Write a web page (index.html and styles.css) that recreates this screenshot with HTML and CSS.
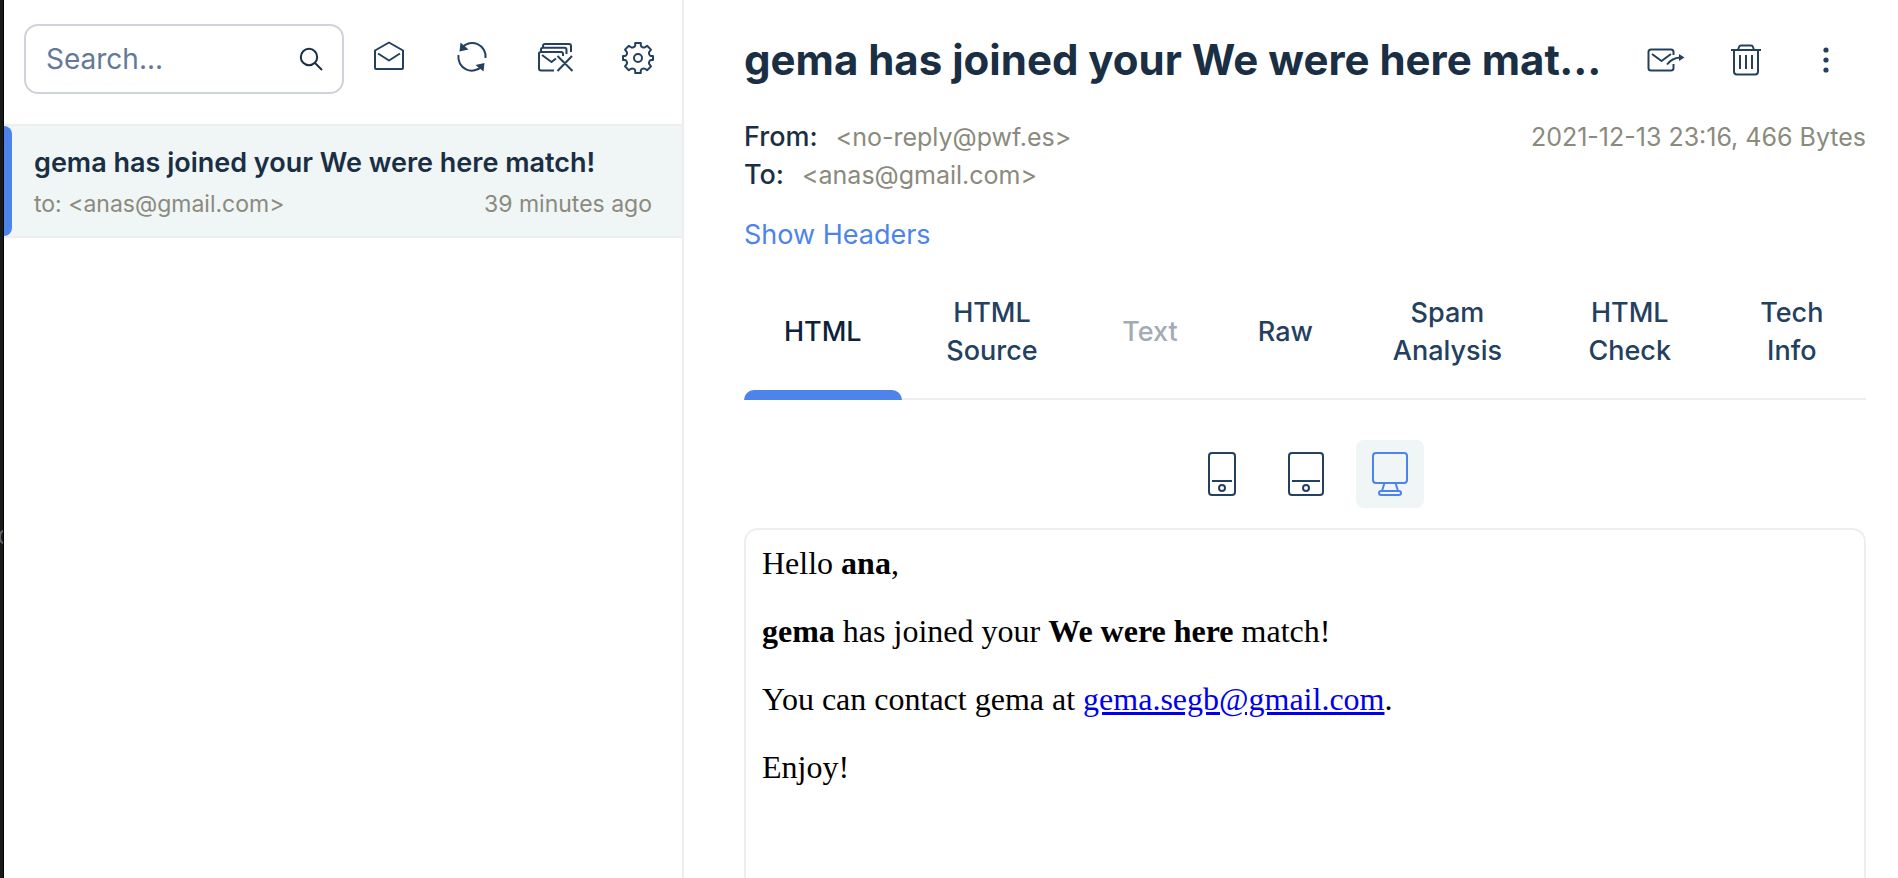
FILE: index.html
```html
<!DOCTYPE html>
<html lang="en">
<head>
<meta charset="utf-8">
<title>Inbox</title>
<link rel="stylesheet" href="styles.css">
</head>
<body>
<div class="app">
  <div class="rail"><svg class="rail-mark" width="3" height="14" viewBox="0 0 3 14"><path d="M3 1Q0 2 0 7t3 6" fill="none" stroke="#62666a" stroke-width="2"/></svg></div>
  <aside class="sidebar">
    <div class="toolbar">
      <div class="search">
        <input class="search-input" type="text" placeholder="Search..." aria-label="Search">
        <svg class="icon search-icon" width="24" height="24" viewBox="0 0 24 24"><circle cx="10" cy="10" r="8.2"/><path d="M16 16l7 7"/></svg>
      </div>
      <div class="actions">
        <button class="icon-btn" aria-label="Mark all as read"><svg class="icon" width="32" height="32" viewBox="0 1 32 32"><path d="M2 10.500L16 2.500l14 8V28q0 1-1 1H3q-1 0-1-1zM5 13.500l11 7 11-7"/></svg></button>
        <button class="icon-btn" aria-label="Refresh"><svg class="icon" width="32" height="32" viewBox="0 0 32 32"><path d="M6 6.500A13.500 13.500 0 0 1 29.500 17M26 25A13.500 13.500 0 0 1 2.500 14"/><path class="solid" d="M4.500 1.500l8 7-9 2zM28.500 22l-1 8.500-8-6.500z"/></svg></button>
        <button class="icon-btn" aria-label="Delete all"><svg class="icon" width="36" height="32" viewBox="0 0 36 32"><path d="M17 29.500H4q-2 0-2-2v-15Q2 11 4 11h20q2 0 2 2v2M4 11V8.500q0-1.800 2-1.800h21.500q2 0 2 2V13M6 6.700V5q0-2 2-2h24q2 0 2 2v6M5 14l9.500 7 4.500-3.500M20.500 15l15 15M35 15L20.500 30"/></svg></button>
        <button class="icon-btn" aria-label="Settings"><svg class="icon" width="34" height="34" viewBox="0 -1 34 34"><circle cx="17" cy="17" r="4"/><path d="M14.200 2h5.600v2.500q.3 1.300 1.600 1.700 1.500.8 2.700 0l2-1.500 3.900 3.900-1.700 2.200q-.8 1.200 0 2.700.4 1.200 1.700 1.500h2v4h-2q-1.300.3-1.700 1.500-.8 1.500 0 2.700l1.700 2.200-3.900 3.900-2-1.500q-1.200-.8-2.700 0-1.300.4-1.600 1.700V32h-5.600v-2.500q-.3-1.300-1.600-1.700-1.500-.8-2.700 0l-2 1.500L4 25.400l1.700-2.200q.8-1.200 0-2.700Q5.300 19.300 4 19H2v-4h2q1.300-.3 1.700-1.500.8-1.500 0-2.700L4 8.600l3.900-3.900 2 1.500q1.200.8 2.700 0 1.300-.4 1.600-1.700z"/></svg></button>
      </div>
    </div>
    <a class="message" href="#message">
      <strong class="message-title">gema has joined your We were here match!</strong>
      <span class="message-meta"><span>to: &lt;anas@gmail.com&gt;</span><span>39 minutes ago</span></span>
    </a>
  </aside>
  <main class="main" id="message">
    <header class="header">
      <h1 class="subject">gema has joined your We were here match!</h1>
      <div class="header-actions">
        <button class="icon-btn" aria-label="Forward"><svg class="icon" width="38" height="24" viewBox="0 0 38 24"><path d="M26.500 7V4q0-2.500-2.500-2.500H4Q1.500 1.500 1.500 4v16q0 2.500 2.500 2.500h20q2.500 0 2.500-2.500v-4M5 6l9.500 7L24 6M20 16.500q5-6.500 13-7"/><path class="solid" d="M32 6l5.500 3.500L32 13z"/></svg></button>
        <button class="icon-btn" aria-label="Delete"><svg class="icon" width="30" height="32" viewBox="0 0 30 32"><path d="M0 6h30M7 6l1-3q.5-1.500 2-1.500h10q1.500 0 2 1.500l1 3M3 6v21.500Q3 30.500 6 30.500h18q3 0 3-3V6M9 11v14M15 11v14M21 11v14"/></svg></button>
        <button class="icon-btn" aria-label="More"><svg width="6" height="26" viewBox="0 0 6 26" fill="#24405f"><circle cx="3" cy="3" r="2.600"/><circle cx="3" cy="13" r="2.600"/><circle cx="3" cy="23" r="2.600"/></svg></button>
      </div>
    </header>
    <section class="details">
      <dl class="people">
        <div class="person"><dt>From:</dt><dd>&lt;no-reply@pwf.es&gt;</dd></div>
        <div class="person"><dt>To:</dt><dd>&lt;anas@gmail.com&gt;</dd></div>
      </dl>
      <span class="stamp">2021-12-13 23:16, 466 Bytes</span>
    </section>
    <a class="headers-link" href="#headers">Show Headers</a>
    <nav class="tabs">
      <button class="tab tab-active">HTML</button>
      <button class="tab">HTML Source</button>
      <button class="tab" disabled>Text</button>
      <button class="tab">Raw</button>
      <button class="tab">Spam Analysis</button>
      <button class="tab">HTML Check</button>
      <button class="tab">Tech Info</button>
    </nav>
    <div class="devices">
      <button class="icon-btn" aria-label="Phone"><svg class="icon" width="28" height="44" viewBox="0 0 28 44"><rect x="1" y="1" width="26" height="42" rx="3"/><path d="M4 29h20"/><circle cx="14" cy="36" r="3"/></svg></button>
      <button class="icon-btn" aria-label="Tablet"><svg class="icon" width="36" height="44" viewBox="0 0 36 44"><rect x="1" y="1" width="34" height="42" rx="3"/><path d="M4 29h28"/><circle cx="18" cy="36" r="3"/></svg></button>
      <button class="icon-btn icon-btn-active" aria-label="Desktop"><svg class="icon" width="36" height="44" viewBox="0 0 36 44"><rect x="1" y="1" width="34" height="30" rx="3"/><path d="M12.500 31L10 39M23.500 31l2.500 8"/><rect x="7" y="39" width="22" height="4" rx="2"/></svg></button>
    </div>
    <article class="preview">
      <p>Hello <b>ana</b>,</p>
      <p><b>gema</b> has joined your <b>We were here</b> match!</p>
      <p>You can contact gema at <a href="mailto:gema.segb@gmail.com">gema.segb@gmail.com</a>.</p>
      <p>Enjoy!</p>
    </article>
  </main>
</div>
</body>
</html>
```
FILE: styles.css
```css
* { box-sizing: border-box; }

body {
  margin: 0;
  background: #fff;
  color: #1a2e44;
  font: 27px/38px Inter, "Liberation Sans", sans-serif;
}

button {
  border: 0;
  padding: 0;
  background: none;
  color: inherit;
  font: inherit;
}

.app {
  display: flex;
  height: 100vh;
  overflow: hidden;
}

.rail {
  position: relative;
  flex: 0 0 4px;
  background: #17191b;
  border-right: 1px solid #000;
}

.rail-mark {
  position: absolute;
  left: 0;
  top: 530px;
}

.sidebar {
  flex: 0 0 680px;
  min-width: 0;
  border-right: 2px solid #eee;
}

.toolbar {
  display: flex;
  align-items: flex-start;
  gap: 11px;
  padding: 24px 10px 30px 20px;
}

.search {
  display: flex;
  flex: 1;
  align-items: center;
  min-width: 0;
  height: 70px;
  padding: 0 19px 0 20px;
  border: 2px solid #cfd4da;
  border-radius: 14px;
}

.search-input {
  flex: 1;
  min-width: 0;
  padding: 0;
  border: 0;
  outline: 0;
  background: none;
  font: inherit;
  font-size: 28px;
}

.search-input::placeholder { color: #64799a; opacity: 1; }

.icon {
  display: block;
  flex: none;
  fill: none;
  stroke: #24405f;
  stroke-width: 2;
  stroke-linejoin: round;
}

.search-icon { stroke: #1a2e44; }

.icon .solid { fill: #24405f; stroke: none; }

.actions { display: flex; gap: 15px; }

.icon-btn {
  display: flex;
  align-items: center;
  justify-content: center;
  width: 68px;
  height: 68px;
  border-radius: 8px;
}

.actions .icon-btn { height: 66px; }

.icon-btn-active { background: #f0f5f6; }
.icon-btn-active .icon { stroke: #4c84ec; }

.message {
  position: relative;
  display: block;
  padding: 18px 30px 13px;
  border: solid #eee;
  border-width: 2px 0;
  background: #f0f5f6;
  color: inherit;
  text-decoration: none;
}

.message::before {
  content: "";
  position: absolute;
  inset: 0 auto 0 0;
  width: 8px;
  border-radius: 0 8px 8px 0;
  background: #4c84ec;
}

.message-title {
  display: block;
  font-weight: 600;
}

.message-meta {
  display: flex;
  justify-content: space-between;
  padding-top: 3px;
  color: #8a8a7d;
  font-size: 23px;
}

.main {
  display: flex;
  flex: 1;
  flex-direction: column;
  min-width: 0;
  padding: 25px 32px 0 60px;
}

.header {
  display: flex;
  align-items: center;
  gap: 12px;
  padding-right: 6px;
}

.subject {
  flex: 1;
  min-width: 0;
  margin: 0;
  overflow: hidden;
  font-size: 42px;
  font-weight: 700;
  line-height: 70px;
  text-overflow: ellipsis;
  white-space: nowrap;
}

.header-actions { display: flex; gap: 12px; }

.details {
  display: flex;
  justify-content: space-between;
  padding-top: 23px;
}

.people { margin: 0; }
.person { display: flex; align-items: baseline; gap: 18px; }
.person dt { font-weight: 500; }
.person dd { margin: 0; }
.person dd, .stamp { color: #8a8a7d; font-size: 25px; }

.headers-link {
  align-self: flex-start;
  margin-top: 22px;
  color: #4c84ec;
  text-decoration: none;
}

.tabs {
  display: flex;
  margin-top: 19px;
  border-bottom: 2px solid #eee;
}

.tab {
  position: relative;
  height: 125px;
  padding: 0 40px 8px;
  color: #24405f;
  font-weight: 500;
}

.tab:disabled { color: #a3abb5; }
.tab-active { color: #0d2238; }

.tab-active::after {
  content: "";
  position: absolute;
  inset: auto 0 -2px;
  height: 10px;
  border-radius: 10px 10px 0 0;
  background: #4c84ec;
}

.devices {
  display: flex;
  justify-content: center;
  gap: 16px;
  padding: 40px 0 20px 2px;
}

.preview {
  flex: 1;
  padding: 15px 16px;
  border: 2px solid #eee;
  border-bottom: 0;
  border-radius: 14px 14px 0 0;
  color: #000;
  font: 32px/36px "Liberation Serif", serif;
}

.preview p { margin: 0 0 32px; }
.preview a { color: #00e; }
```
